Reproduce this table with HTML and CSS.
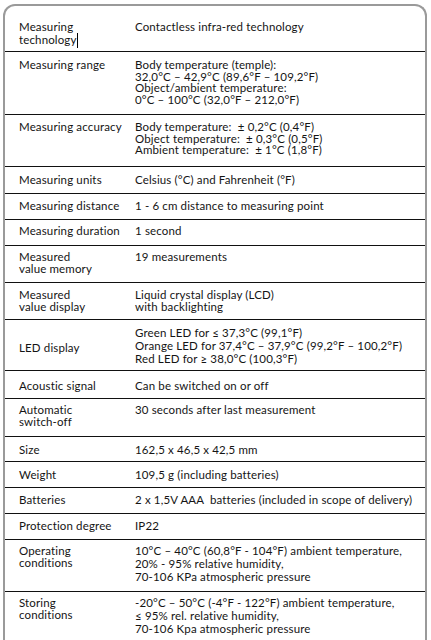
FILE: index.html
```html
<!DOCTYPE html>
<html lang="en">
<head>
<meta charset="utf-8">
<title>Technical data</title>
<link rel="stylesheet" href="styles.css">
</head>
<body>
<div class="sheet">
  <div class="row r1">
    <div class="label">Measuring<br>technology<span class="caret"></span></div>
    <div class="value">Contactless infra-red technology</div>
  </div>
  <div class="row r2">
    <div class="label">Measuring range</div>
    <div class="value tight">Body temperature (temple):<br>32,0°C – 42,9°C (89,6°F – 109,2°F)<br>Object/ambient temperature:<br>0°C – 100°C (32,0°F – 212,0°F)</div>
  </div>
  <div class="row r3">
    <div class="label">Measuring accuracy</div>
    <div class="value mid">Body temperature:&nbsp; ± 0,2°C (0,4°F)<br>Object temperature:&nbsp; ± 0,3°C (0,5°F)<br>Ambient temperature:&nbsp; ± 1°C (1,8°F)</div>
  </div>
  <div class="row r4">
    <div class="label">Measuring units</div>
    <div class="value">Celsius (°C) and Fahrenheit (°F)</div>
  </div>
  <div class="row r5">
    <div class="label">Measuring distance</div>
    <div class="value">1 - 6 cm distance to measuring point</div>
  </div>
  <div class="row r6">
    <div class="label">Measuring duration</div>
    <div class="value">1 second</div>
  </div>
  <div class="row r7">
    <div class="label">Measured<br>value memory</div>
    <div class="value">19 measurements</div>
  </div>
  <div class="row r8">
    <div class="label">Measured<br>value display</div>
    <div class="value">Liquid crystal display (LCD)<br>with backlighting</div>
  </div>
  <div class="row r9">
    <div class="label centered">LED display</div>
    <div class="value loose">Green LED for ≤ 37,3°C (99,1°F)<br>Orange LED for 37,4°C – 37,9°C (99,2°F – 100,2°F)<br>Red LED for ≥ 38,0°C (100,3°F)</div>
  </div>
  <div class="row r10">
    <div class="label">Acoustic signal</div>
    <div class="value">Can be switched on or off</div>
  </div>
  <div class="row r11">
    <div class="label">Automatic<br>switch-off</div>
    <div class="value">30 seconds after last measurement</div>
  </div>
  <div class="row r12">
    <div class="label">Size</div>
    <div class="value">162,5 x 46,5 x 42,5 mm</div>
  </div>
  <div class="row r13">
    <div class="label">Weight</div>
    <div class="value">109,5 g (including batteries)</div>
  </div>
  <div class="row r14">
    <div class="label">Batteries</div>
    <div class="value">2 x 1,5V AAA&nbsp; batteries (included in scope of delivery)</div>
  </div>
  <div class="row r15">
    <div class="label">Protection degree</div>
    <div class="value">IP22</div>
  </div>
  <div class="row r16">
    <div class="label">Operating<br>conditions</div>
    <div class="value loose">10°C – 40°C (60,8°F - 104°F) ambient temperature,<br>20% - 95% relative humidity,<br>70-106 KPa atmospheric pressure</div>
  </div>
  <div class="row r17">
    <div class="label">Storing<br>conditions</div>
    <div class="value loose">-20°C – 50°C (-4°F - 122°F) ambient temperature,<br>≤ 95% rel. relative humidity,<br>70-106 Kpa atmospheric pressure</div>
  </div>
</div>
</body>
</html>
```
FILE: styles.css
```css
html, body {
  margin: 0;
  padding: 0;
  background: #ffffff;
  overflow: hidden;
}

body {
  font-family: Lato, "Liberation Sans", sans-serif;
  font-size: 11.5px;
  letter-spacing: 0.14px;
  color: #141414;
}

.sheet {
  margin: 4px 0 0 3px;
  width: 420px;
  border: 2px solid #9a9a9a;
  border-bottom: none;
  border-radius: 12px 12px 0 0;
  overflow: hidden;
  box-sizing: content-box;
}

.row {
  display: grid;
  grid-template-columns: 130px 1fr;
  border-bottom: 1px solid #111;
  box-sizing: border-box;
}

.label {
  padding-left: 14px;
  line-height: 12.3px;
  white-space: nowrap;
}

.value {
  line-height: 12.3px;
  white-space: nowrap;
}

.value.tight { line-height: 11.7px; }
.value.mid { line-height: 11.7px; }
.value.loose { line-height: 12.8px; }

.label.centered {
  align-self: center;
}

.caret {
  display: inline-block;
  width: 0;
  height: 15px;
  border-left: 1px solid #000;
  vertical-align: -4px;
}

.r1  { height: 46px; padding-top: 15px; }
.r2  { height: 63px; padding-top: 7px; }
.r3  { height: 52px; padding-top: 6px; }
.r4  { height: 27px; padding-top: 7px; }
.r5  { height: 26px; padding-top: 6px; }
.r6  { height: 26px; padding-top: 5px; }
.r7  { height: 37px; padding-top: 5px; }
.r8  { height: 37px; padding-top: 6px; }
.r9  { height: 51px; padding-top: 7px; }
.r10 { height: 28px; padding-top: 9px; }
.r11 { height: 38px; padding-top: 5px; }
.r12 { height: 25px; padding-top: 7px; }
.r13 { height: 26px; padding-top: 7px; }
.r14 { height: 26px; padding-top: 6px; }
.r15 { height: 26px; padding-top: 6px; }
.r16 { height: 52px; padding-top: 5px; }
.r17 { height: 48px; padding-top: 5px; border-bottom: none; }
```
